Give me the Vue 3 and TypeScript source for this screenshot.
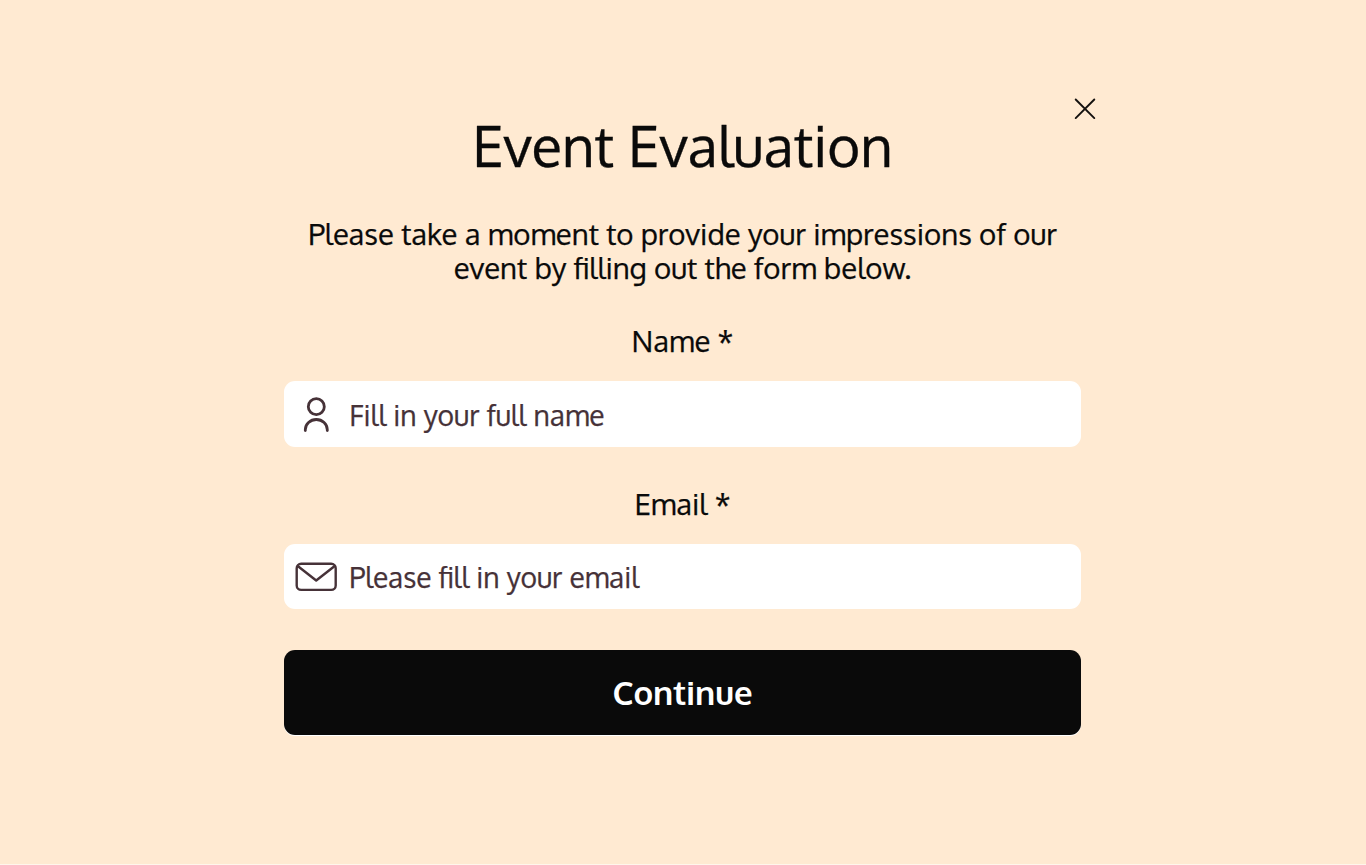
<script setup lang="ts">
import { ref } from 'vue'

const name = ref('')
const email = ref('')
</script>

<template>
  <main class="page">
    <form class="form" @submit.prevent>
      <button class="close" type="button" aria-label="Close">
        <svg width="22" height="22" viewBox="0 0 22 22"><path d="M1.7 1.5 20.3 20.1M20.3 1.5 1.7 20.1" /></svg>
      </button>
      <h1 class="title">Event Evaluation</h1>
      <p class="intro">Please take a moment to provide your impressions of our<br />event by filling out the form below.</p>

      <label class="label" for="name">Name *</label>
      <div class="field">
        <span class="icon">
          <svg width="42" height="40" viewBox="0 0 42 40">
            <circle cx="21.3" cy="12.7" r="8" />
            <path d="M10.3 36.5v-.8a11 10.2 0 0 1 22 0v.8" />
          </svg>
        </span>
        <input id="name" v-model="name" class="name-input" type="text" placeholder="Fill in your full name" />
      </div>

      <label class="label email-label" for="email">Email *</label>
      <div class="field email-field">
        <span class="icon">
          <svg width="42" height="40" viewBox="0 0 42 40">
            <rect x="1.7" y="6.7" width="39" height="26.2" rx="4.5" />
            <path d="m3 9.3 18.2 14.2L39.4 9.3" />
          </svg>
        </span>
        <input id="email" v-model="email" type="text" placeholder="Please fill in your email" />
      </div>

      <button class="submit" type="submit">Continue</button>
    </form>
  </main>
</template>

<style>
body {
  margin: 0;
  background: #ffead2;
}
</style>

<style scoped>
.page {
  box-sizing: border-box;
  height: 865px;
  padding-top: 98px;
  background: #ffead2;
  border-bottom: 1px solid #fff6ec;
  font-family: Oxygen, "Noto Sans", "Open Sans", sans-serif;
  color: #0a0a0a;
  overflow: hidden;
}
.form {
  position: relative;
  display: flex;
  flex-direction: column;
  width: 797.5px;
  margin: 0 auto;
  left: -0.5px;
  text-align: center;
}
.close {
  position: absolute;
  top: 0;
  right: -15px;
  width: 22px;
  height: 22px;
  padding: 0;
  border: 0;
  background: none;
}
svg {
  display: block;
  fill: none;
  stroke-linecap: round;
  stroke-linejoin: round;
}
.close svg {
  stroke: #14110f;
  stroke-width: 1.9;
}
.title {
  margin: 7px 0 0;
  font-size: 56.3px;
  line-height: 80px;
  font-weight: 400;
  white-space: nowrap;
  -webkit-text-stroke: 0.3px currentColor;
}
.intro {
  margin: 31.5px 0 0;
  font-size: 29.33px;
  line-height: 34.25px;
  white-space: nowrap;
  -webkit-text-stroke: 0.25px currentColor;
}
.label {
  display: block;
  height: 40px;
  margin-top: 36px;
  font-size: 29.33px;
  line-height: 40px;
  -webkit-text-stroke: 0.25px currentColor;
}
.email-label {
  margin-top: 37px;
}
.field {
  box-sizing: border-box;
  display: flex;
  align-items: center;
  height: 66px;
  margin-top: 20px;
  padding-left: 11px;
  border-radius: 11px;
  background: #fff;
}
.email-field {
  height: 65px;
}
.icon {
  flex: none;
  stroke: #463238;
  stroke-width: 2.8;
}
.email-field .icon {
  stroke-width: 2.4;
}
input {
  flex: 1;
  min-width: 0;
  height: 60px;
  margin-left: 12.5px;
  padding: 0;
  border: 0;
  outline: 0;
  background: none;
  color: #463238;
  font: 400 28.2px/40px Oxygen, "Noto Sans", "Open Sans", sans-serif;
  -webkit-text-stroke: 0.25px currentColor;
}
.name-input {
  padding-top: 2px;
}
input::placeholder {
  color: #463238;
  opacity: 1;
}
.submit {
  height: 85px;
  margin-top: 40.5px;
  padding: 0;
  border: 0;
  border-radius: 11px;
  background: #0a0a0a;
  box-shadow: 0 1px 0 #fff;
  color: #fff;
  font: 700 33px/40px Oxygen, "Noto Sans", "Open Sans", sans-serif;
}
</style>
